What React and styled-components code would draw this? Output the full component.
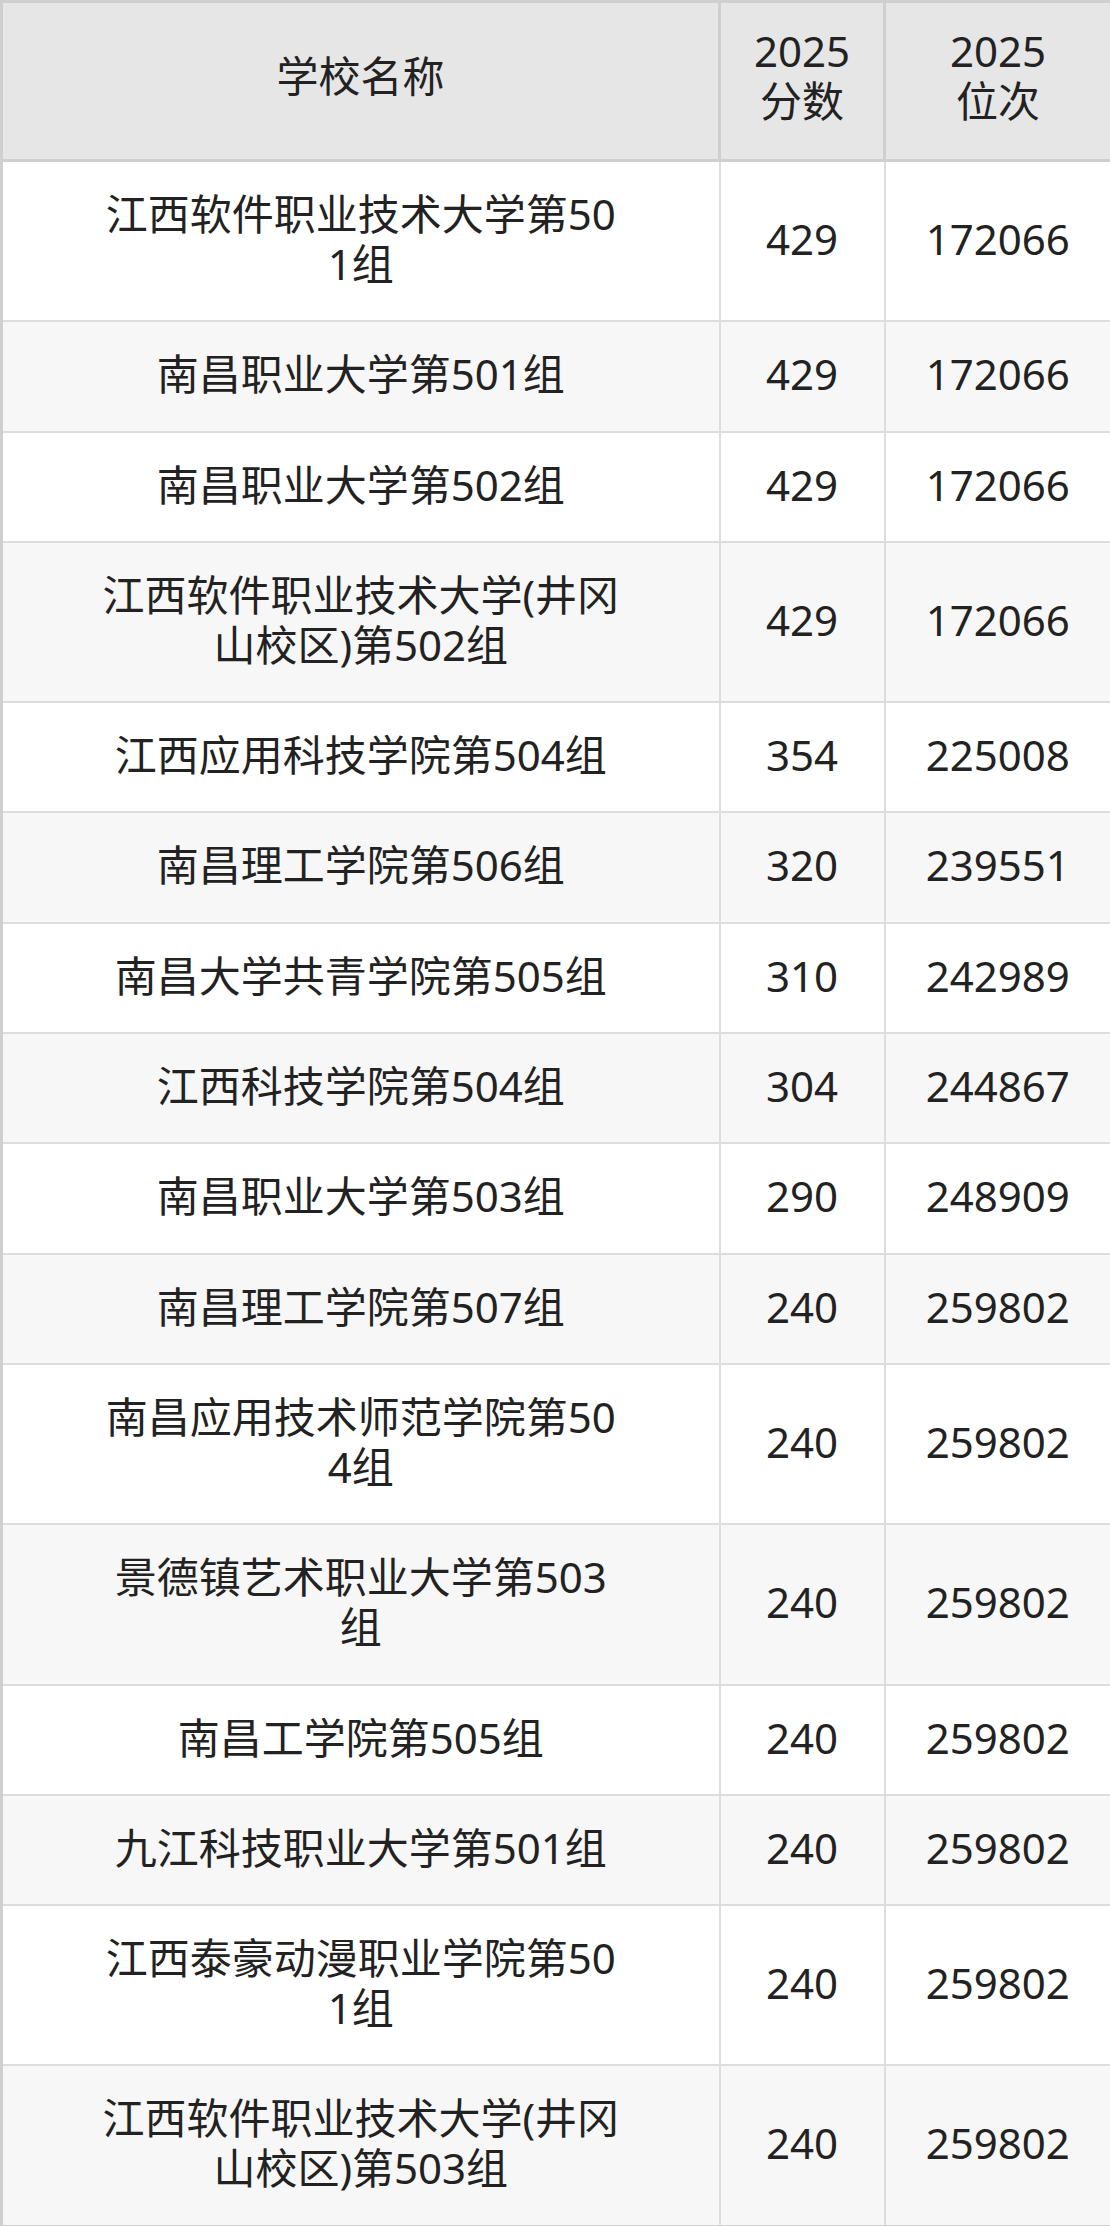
import React from 'react';
import styled, { createGlobalStyle } from 'styled-components';

const GlobalStyle = createGlobalStyle`
    html, body {
        margin: 0;
        padding: 0;
        background: #ffffff;
    }
    body {
        font-family: "Noto Sans", "Noto Sans CJK SC", sans-serif;
        color: #222222;
    }
`

const Table = styled.table`
    width: 1110px;
    table-layout: fixed;
    border-collapse: collapse;
    border: 3px solid #cfcfcf;
    font-size: 42px;
    line-height: 50px;
`

const HeadCell = styled.th`
    background: #e6e6e6;
    border: 3px solid #cfcfcf;
    font-weight: 400;
    padding: 23px 10px 33px;
    text-align: center;
    vertical-align: middle;
`

const Row = styled.tr`
    background: ${({ striped }) => (striped ? '#f7f7f7' : '#ffffff')};
`

const Cell = styled.td`
    border: 2px solid #dddddd;
    padding: 27px ${({ wide }) => (wide ? '95px' : '6px')} 31.3px;
    text-align: center;
    vertical-align: middle;
    word-break: break-all;
`

const rows = [
    ['江西软件职业技术大学第501组', '429', '172066'],
    ['南昌职业大学第501组', '429', '172066'],
    ['南昌职业大学第502组', '429', '172066'],
    ['江西软件职业技术大学(井冈山校区)第502组', '429', '172066'],
    ['江西应用科技学院第504组', '354', '225008'],
    ['南昌理工学院第506组', '320', '239551'],
    ['南昌大学共青学院第505组', '310', '242989'],
    ['江西科技学院第504组', '304', '244867'],
    ['南昌职业大学第503组', '290', '248909'],
    ['南昌理工学院第507组', '240', '259802'],
    ['南昌应用技术师范学院第504组', '240', '259802'],
    ['景德镇艺术职业大学第503组', '240', '259802'],
    ['南昌工学院第505组', '240', '259802'],
    ['九江科技职业大学第501组', '240', '259802'],
    ['江西泰豪动漫职业学院第501组', '240', '259802'],
    ['江西软件职业技术大学(井冈山校区)第503组', '240', '259802'],
]

function App() {
    return (
        <>
            <GlobalStyle />
            <Table>
                <colgroup>
                    <col style={{ width: '718px' }} />
                    <col style={{ width: '165px' }} />
                    <col style={{ width: '227px' }} />
                </colgroup>
                <thead>
                    <tr>
                        <HeadCell>学校名称</HeadCell>
                        <HeadCell>2025<br />分数</HeadCell>
                        <HeadCell>2025<br />位次</HeadCell>
                    </tr>
                </thead>
                <tbody>
                    {rows.map((item, index) => (
                        <Row striped={index % 2 === 1} key={index}>
                            <Cell wide>{item[0]}</Cell>
                            <Cell>{item[1]}</Cell>
                            <Cell>{item[2]}</Cell>
                        </Row>
                    ))}
                </tbody>
            </Table>
        </>
    );
}

export default App;
